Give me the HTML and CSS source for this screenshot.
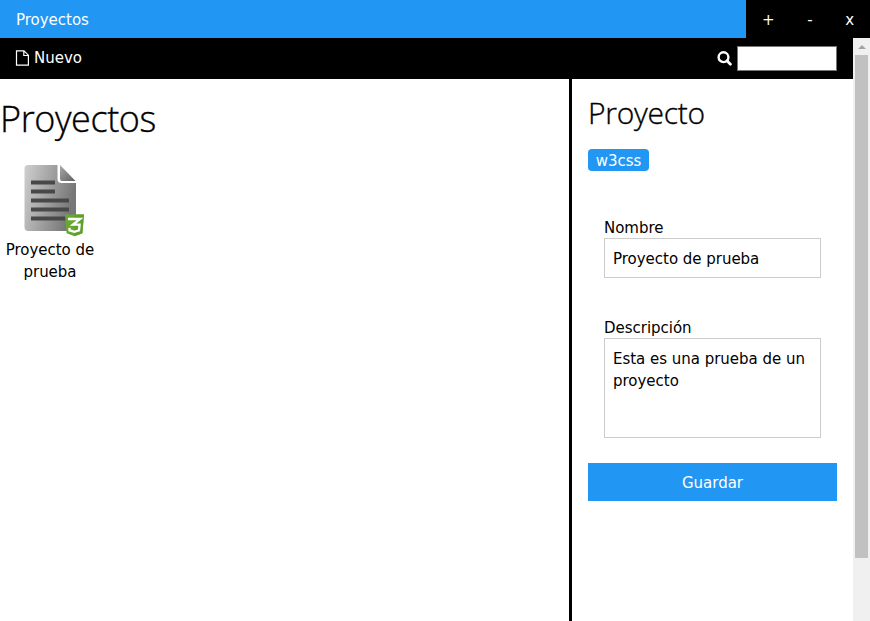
FILE: index.html
```html
<!DOCTYPE html>
<html lang="es">
<head>
<meta charset="utf-8">
<title>Proyectos</title>
<link rel="stylesheet" href="styles.css">
</head>
<body>
<div class="window">
  <header class="titlebar">
    <div class="title">Proyectos</div>
    <div class="controls"><span>+</span><span>-</span><span>x</span></div>
  </header>
  <div class="body">
    <div class="app">
      <nav class="toolbar">
        <div class="new">
          <svg width="14" height="16" viewBox="0 0 14 16" fill="none" stroke="#fff" stroke-width="1.2"><path d="M1.500.8H9L13.400 5.200V15.2H1.500ZM8.800.8V5.500H13.400"/></svg>
          <span>Nuevo</span>
        </div>
        <div class="search">
          <svg width="15" height="15" viewBox="0 0 15 15" fill="none" stroke="#fff"><circle cx="6.5" cy="6.2" r="4.9" stroke-width="2.4"/><path d="M10 9.8 13.4 13.2" stroke-width="2.8" stroke-linecap="round"/></svg>
          <input class="search-input" type="text" aria-label="Buscar">
        </div>
      </nav>
      <div class="content">
        <main class="list">
          <h1>Proyectos</h1>
          <div class="project">
            <svg class="file" width="62" height="74" viewBox="0 0 62 74">
              <defs>
                <linearGradient id="paper" x1="0" y1="0" x2="1" y2="0.3"><stop offset="0" stop-color="#d0d0d0"/><stop offset="1" stop-color="#777"/></linearGradient>
                <linearGradient id="fold" x1="0" y1="0" x2="1" y2="1"><stop offset="0" stop-color="#aaa"/><stop offset="1" stop-color="#606060"/></linearGradient>
              </defs>
              <path d="M4 1H33.500V15Q33.500 19 37.500 19H52V63Q52 67 48 67H4Q0.500 67 0.500 63V4.500Q0.500 1 4 1Z" fill="url(#paper)"/>
              <path d="M36 1 51.500 17H38Q36 17 36 15Z" fill="url(#fold)"/>
              <path d="M7 18.500H31M7 27.500H31M7 36.500H45M7 45.500H45M7 54.500H45" stroke="#484848" stroke-width="3.800"/>
              <path d="M41 50.500H60L58.400 69.200 50.500 72.200 42.600 69.200Z" fill="#68a832"/>
              <path d="M50.500 50.500H60L58.400 69.200 50.500 72.200Z" fill="#5da02b"/>
              <path d="M44 55H56.200L49 60.600H55.600L55 66.300 50.300 67.800 45.600 66.300 45.400 63.800" fill="none" stroke="#fff" stroke-width="2.300"/>
            </svg>
            <div class="name">Proyecto de prueba</div>
          </div>
        </main>
        <aside class="details">
          <h2>Proyecto</h2>
          <span class="tag">w3css</span>
          <form class="fields">
            <label for="nombre">Nombre</label>
            <input id="nombre" class="field" type="text" value="Proyecto de prueba">
            <label for="desc">Descripción</label>
            <textarea id="desc" class="field area" spellcheck="false">Esta es una prueba de un proyecto</textarea>
          </form>
          <button class="save" type="button">Guardar</button>
        </aside>
      </div>
    </div>
    <div class="scrollbar"><i class="arrow"></i><i class="thumb"></i></div>
  </div>
</div>
</body>
</html>
```
FILE: styles.css
```css
* { box-sizing: border-box; }
body { margin: 0; overflow: hidden; background: #fff; color: #000; font: 15px/22px Verdana, "DejaVu Sans", sans-serif; letter-spacing: -0.02px; }
svg { display: block; flex: none; }
.window { height: 621px; display: flex; flex-direction: column; }
.titlebar { height: 38px; display: flex; background: #000; color: #fff; line-height: 38px; }
.title { width: 746px; padding-left: 16px; padding-top: 1px; background: #2196f3; }
.controls { flex: 1; display: flex; justify-content: space-between; padding: 1px 16px; }
.body { flex: 1; display: flex; min-height: 0; }
.app { flex: 1; display: flex; flex-direction: column; }
.toolbar { height: 41px; padding: 0 16px 0 15px; display: flex; align-items: center; justify-content: space-between; background: #000; color: #fff; }
.new { display: flex; align-items: center; gap: 5px; padding-bottom: 1px; }
.search { display: flex; align-items: center; gap: 5px; }
.search-input { width: 100px; height: 25px; border: 1px solid #767676; background: #fff; padding: 1px 2px; outline: 0; }
.content { flex: 1; display: flex; }
.list { width: 572px; border-right: 3px solid #000; }
h1, h2 { font-family: "Segoe UI", "Open Sans", sans-serif; font-weight: 300; letter-spacing: -0.4px; -webkit-text-stroke: 0.35px #000; margin: 0; }
h1 { font-size: 36px; line-height: 54px; padding-top: 13px; }
.project { width: 100px; padding-top: 18px; text-align: center; }
.file { margin: 0 0 1px 24px; }
.details { flex: 1; padding: 11px 16px 0; }
h2 { font-size: 30px; line-height: 45px; letter-spacing: -0.25px; }
.tag { display: block; width: 61px; height: 22px; margin-top: 14px; border-radius: 4px; background: #2196f3; color: #fff; text-align: center; line-height: 24px; }
.fields { display: flex; flex-direction: column; padding: 46px 16px 0; }
label { height: 21px; line-height: 23px; }
.field { width: 100%; height: 40px; padding: 9px 8px 7px; border: 1px solid #ccc; border-radius: 0; background: #fff; color: #000; font: inherit; letter-spacing: inherit; margin-bottom: 39px; outline: 0; }
.area { height: 100px; resize: none; overflow: hidden; margin-bottom: 25px; }
.save { display: block; width: 100%; height: 38px; padding: 2px 0 0; border: 0; background: #2196f3; color: #fff; font: inherit; letter-spacing: inherit; }
.scrollbar { width: 17px; background: #f0f0f0; }
.arrow { display: block; width: 0; margin: 7px 0 6px 5px; border: 4px solid transparent; border-top: 0; border-bottom-color: #a3a3a3; }
.thumb { display: block; width: 13px; height: 503px; margin-left: 2px; background: #c1c1c1; }
```
